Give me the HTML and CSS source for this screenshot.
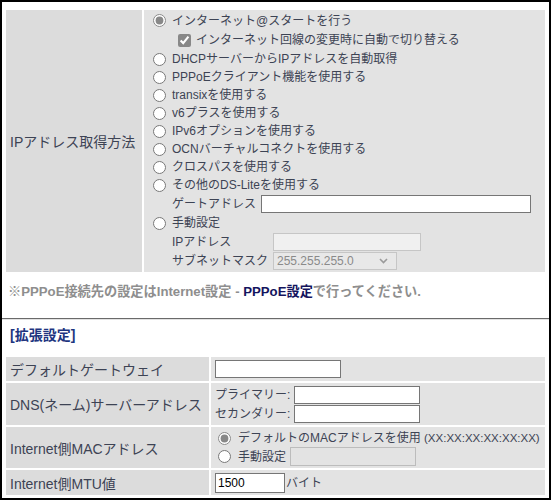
FILE: index.html
```html
<!DOCTYPE html>
<html lang="ja">
<head>
<meta charset="utf-8">
<title>Internet設定</title>
<link rel="stylesheet" href="styles.css">
</head>
<body>
<div class="frame">
  <table class="grid top">
    <tr>
      <th class="lbl lbl-top">IPアドレス取得方法</th>
      <td class="opts">
        <label class="ln h19"><input type="radio" name="ipm" checked><span>インターネット@スタートを行う</span></label>
        <label class="ln h20 sub"><input type="checkbox" checked><span>インターネット回線の変更時に自動で切り替える</span></label>
        <label class="ln h18"><input type="radio" name="ipm"><span>DHCPサーバーからIPアドレスを自動取得</span></label>
        <label class="ln h18"><input type="radio" name="ipm"><span>PPPoEクライアント機能を使用する</span></label>
        <label class="ln h18"><input type="radio" name="ipm"><span>transixを使用する</span></label>
        <label class="ln h18"><input type="radio" name="ipm"><span>v6プラスを使用する</span></label>
        <label class="ln h18"><input type="radio" name="ipm"><span>IPv6オプションを使用する</span></label>
        <label class="ln h18"><input type="radio" name="ipm"><span>OCNバーチャルコネクトを使用する</span></label>
        <label class="ln h18"><input type="radio" name="ipm"><span>クロスパスを使用する</span></label>
        <label class="ln h18"><input type="radio" name="ipm"><span>その他のDS-Liteを使用する</span></label>
        <div class="ln h20 ind"><span class="fl w89">ゲートアドレス</span><input class="txt gw" type="text"></div>
        <label class="ln h18"><input type="radio" name="ipm"><span>手動設定</span></label>
        <div class="ln h19 ind"><span class="fl w101">IPアドレス</span><input class="txt dis ipaddr" type="text" disabled></div>
        <div class="ln h19 ind"><span class="fl w101">サブネットマスク</span>
          <span class="selwrap"><select class="sel" disabled><option>255.255.255.0</option></select><svg class="chev" width="9" height="6" viewBox="0 0 9 6"><path d="M1 1 L4.5 4.5 L8 1" fill="none" stroke="#9a9a9a" stroke-width="1.6"/></svg></span>
        </div>
      </td>
    </tr>
  </table>

  <p class="note">※PPPoE接続先の設定はInternet設定 - <a class="link" href="#">PPPoE設定</a>で行ってください.</p>

  <hr class="rule">

  <h2 class="section">[拡張設定]</h2>

  <table class="grid bottom">
    <tr class="r1">
      <th class="lbl">デフォルトゲートウェイ</th>
      <td class="val"><input class="txt w126" type="text"></td>
    </tr>
    <tr class="r2">
      <th class="lbl">DNS(ネーム)サーバーアドレス</th>
      <td class="val">
        <div class="dns">
          <span>プライマリー:</span><input class="txt w126" type="text">
          <span>セカンダリー:</span><input class="txt w126" type="text">
        </div>
      </td>
    </tr>
    <tr class="r3">
      <th class="lbl">Internet側MACアドレス</th>
      <td class="val mac">
        <label class="ln h18"><input type="radio" name="mac" checked><span>デフォルトのMACアドレスを使用 <span class="fmt">(XX:XX:XX:XX:XX:XX)</span></span></label>
        <div class="ln h19"><label class="ln"><input type="radio" name="mac"><span>手動設定</span></label><input class="txt dis2 macin" type="text" disabled></div>
      </td>
    </tr>
    <tr class="r4">
      <th class="lbl">Internet側MTU値</th>
      <td class="val"><div class="ln"><input class="txt mtu" type="text" value="1500"><span>バイト</span></div></td>
    </tr>
  </table>
</div>
</body>
</html>
```

FILE: styles.css
```css
html, body {
  margin: 0;
  padding: 0;
  overflow: hidden;
  background: #fff;
}
body {
  font-family: "Liberation Sans", "Noto Sans CJK JP", sans-serif;
  font-size: 12px;
  color: #3d4354;
}
.frame {
  width: 551px;
  height: 500px;
  box-sizing: border-box;
  border: 2px solid #000;
  padding: 6px 2px 0;
}
.grid {
  width: 100%;
  border-collapse: separate;
  border-spacing: 2px;
  background: #fff;
}
.lbl {
  background: #dcdcdc;
  font-weight: normal;
  text-align: left;
  font-size: 14px;
  padding: 0 0 0 4px;
  vertical-align: middle;
  white-space: nowrap;
}
.lbl-top { width: 132px; }
.opts {
  background: #e3e3e3;
  padding: 1px 0 2px 9px;
  vertical-align: top;
}
.ln {
  display: flex;
  align-items: center;
  white-space: nowrap;
  line-height: 18px;
}
.h18 { height: 18px; }
.h19 { height: 19px; }
.h20 { height: 20px; }
input[type="radio"] {
  width: 13px;
  height: 13px;
  margin: 0 6px 0 0;
  accent-color: #888;
}
input[type="checkbox"] {
  width: 13px;
  height: 13px;
  margin: 0 5px 0 0;
  accent-color: #888;
}
.sub { padding-left: 25px; }
.ind { padding-left: 19px; }
.fl { flex: none; }
.w89 { width: 89px; }
.w101 { width: 101px; }
.txt {
  box-sizing: border-box;
  height: 18px;
  border: 1px solid #767676;
  background: #fff;
  margin: 0;
  padding: 0 2px;
  font-family: "Liberation Sans", sans-serif;
  font-size: 12px;
  color: #000;
  border-radius: 0;
}
.gw { width: 270px; }
.dis {
  background: #f0f0f0;
  border-color: #c6c6c6;
}
.ipaddr { width: 148px; }
.selwrap {
  position: relative;
  display: inline-block;
  height: 18px;
}
.sel {
  appearance: none;
  -webkit-appearance: none;
  box-sizing: border-box;
  width: 124px;
  height: 18px;
  margin: 0;
  padding: 0 0 0 3px;
  border: 1px solid #c6c6c6;
  border-radius: 0;
  background: #e8e8e8;
  color: #8a8a8a;
  font-family: "Liberation Sans", sans-serif;
  font-size: 12px;
  line-height: 16px;
  opacity: 1;
}
.chev {
  position: absolute;
  right: 9px;
  top: 6px;
}
.note {
  margin: 9px 0 0 4px;
  height: 18px;
  line-height: 18px;
  font-size: 13.2px;
  font-weight: bold;
  color: #8e8e8e;
  white-space: nowrap;
}
.link {
  color: #14145e;
  text-decoration: none;
}
.rule {
  margin: 17px -2px 0;
  height: 0;
  border: none;
  border-top: 1px solid #6a6a6a;
  border-bottom: 1px solid #e2e2e2;
}
.section {
  margin: 6px 0 0 6px;
  height: 18px;
  line-height: 18px;
  font-size: 14px;
  font-weight: bold;
  color: #1e3580;
}
.bottom { margin-top: 11px; }
.bottom .lbl { width: 199px; }
.val {
  background: #e3e3e3;
  padding: 0 0 0 4px;
  vertical-align: middle;
}
.r1 > * { height: 24px; }
.r2 > * { height: 42px; }
.r3 > * { height: 41px; }
.r4 > * { height: 25px; }
.w126 { width: 126px; }
.dns {
  display: grid;
  grid-template-columns: max-content max-content;
  column-gap: 4px;
  row-gap: 1px;
  align-items: center;
  line-height: 18px;
}
.mac { padding-left: 7px; }
.mac input[type="radio"] { margin-right: 7px; }
.fmt { font-size: 11.5px; }
.dis2 {
  width: 126px;
  height: 19px;
  margin-left: 4px;
  background: #e3e3e3;
  border-color: #bcbcbc;
}
.mtu {
  width: 70px;
  height: 20px;
  margin-right: 1px;
}
```
